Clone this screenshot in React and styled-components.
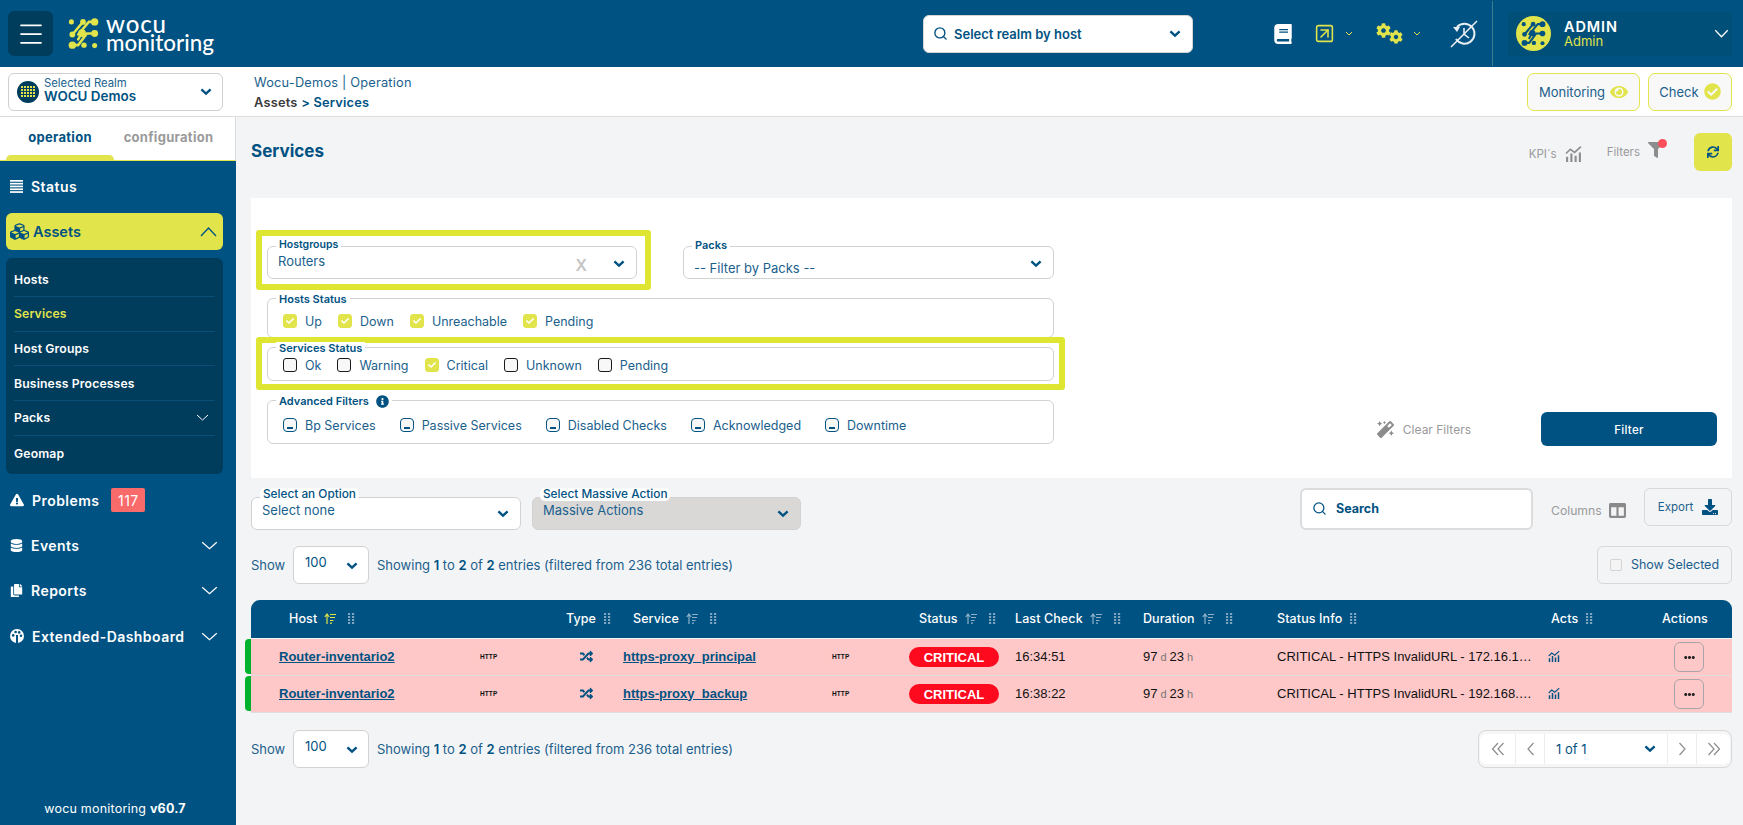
import React from "react";
import styled, { createGlobalStyle } from "styled-components";
import {
  FaBook,
  FaCog,
  FaEye,
  FaCheckCircle,
  FaSync,
  FaDownload,
  FaRandom,
  FaFilter,
  FaMagic,
  FaExclamationTriangle,
  FaDatabase,
  FaCopy,
  FaCubes,
  FaInfoCircle,
  FaColumns,
  FaEllipsisH,
  FaCheck,
} from "react-icons/fa";
import { Menu, Search, SquareArrowUpRight } from "lucide-react";

const NAVY = "#005282";
const DARK = "#003c5c";
const YELLOW = "#e1e44b";
const LIME = "#dfe632";
const TEXT = "#1b5f8d";
const COLS = "305px 57px 286px 106px 128px 134px 274px 109px 82px";

const GlobalStyle = createGlobalStyle`
  html, body { margin: 0; padding: 0; height: 100%; }
  body { background: #f3f4f6; font-family: "Inter", "Noto Sans", sans-serif; color: ${NAVY}; }
  * { box-sizing: border-box; }
`;

const Chevron = ({ w = 14, h = 9, color = NAVY, sw = 2.4 }) => (
  <svg width={w} height={h} viewBox={`0 0 ${w} ${h}`} fill="none">
    <polyline points={`${sw},${sw} ${w / 2},${h - sw} ${w - sw},${sw}`} stroke={color} strokeWidth={sw} />
  </svg>
);

const LogoMark = ({ size = 31, color = YELLOW }) => (
  <svg width={size} height={size} viewBox="0 0 31 32" fill="none" stroke={color} strokeLinecap="round" style={{ flexShrink: 0 }}>
    <g strokeWidth="2.6">
      <path d="M15 4 L5 16" />
      <path d="M27 4 H21 L10 17" />
      <path d="M27 16 H19 L10 28 H4" />
      <path d="M14 15 L10 22" />
    </g>
    <g fill={color} stroke="none">
      <circle cx="3" cy="4" r="2.6" />
      <circle cx="15" cy="4" r="3" />
      <circle cx="27" cy="4" r="3.8" />
      <circle cx="4" cy="17" r="3" />
      <circle cx="14" cy="15.5" r="4" />
      <circle cx="27" cy="16" r="3.6" />
      <circle cx="4" cy="28" r="3.8" />
      <circle cx="16" cy="28" r="2.8" />
      <circle cx="27" cy="28.5" r="2.6" />
    </g>
  </svg>
);

const RealmMark = () => (
  <svg width="22" height="22" viewBox="0 0 22 22">
    <circle cx="11" cy="11" r="11" fill={DARK} />
    {[5, 8, 11, 14, 17].flatMap((x) =>
      [6, 9, 12, 15].map((y) => <rect key={`${x}-${y}`} x={x - 1} y={y - 1} width="2" height="2" fill={YELLOW} />)
    )}
  </svg>
);

const NoHistory = () => (
  <svg width="28" height="28" viewBox="0 0 28 28" fill="none" stroke="#e8eef2" strokeWidth="1.6">
    <path d="M7 7 A10 10 0 1 1 6 19" strokeWidth="2" />
    <path d="M3 7 H10 L7 12 Z" fill="#e8eef2" stroke="none" />
    <path d="M14 8 V14 L19 18" />
    <path d="M27 1 L1 27" />
  </svg>
);

const KpiIcon = ({ color = "#8d8d8d", size = 17 }) => (
  <svg width={size} height={size} viewBox="0 0 16 16" fill="none" stroke={color}>
    <path d="M1 8 L5 4 L9 7 L15 1.5" strokeWidth="1.5" />
    <path d="M2 16 V11 M6 16 V8 M10 16 V10 M14 16 V7" strokeWidth="2" />
  </svg>
);

const SortIcon = ({ color = "#8fb2c9" }) => (
  <svg width="12" height="11" viewBox="0 0 12 11" fill="none" stroke={color} strokeWidth="1.2">
    <path d="M3 11 V1.5 M0.8 4 L3 1 L5.2 4" />
    <path d="M6 1.5 H12 M6 4.5 H11 M6 7.5 H9.5 M6 10.2 H8" />
  </svg>
);

const DragIcon = () => (
  <svg width="7" height="11" viewBox="0 0 7 11" fill="#7fa6c0">
    {[0, 4].flatMap((x) =>
      [0, 3, 6, 9].map((y) => <rect key={`${x}-${y}`} x={x} y={y} width="2.2" height="2" />)
    )}
  </svg>
);

const StatusLinesIcon = () => (
  <svg width="13" height="13" viewBox="0 0 13 13" fill="#fff">
    {[0, 2.8, 5.6, 8.4, 11.2].map((y) => (
      <rect key={y} x="0" y={y} width="13" height="1.7" />
    ))}
  </svg>
);

const DashboardIcon = () => (
  <svg width="14" height="14" viewBox="0 0 14 14">
    <circle cx="7" cy="7" r="7" fill="#fff" />
    <g fill={NAVY}>
      <circle cx="3.2" cy="6.4" r="1.3" />
      <circle cx="5.6" cy="3" r="1.3" />
      <circle cx="9.2" cy="3.4" r="1.3" />
      <circle cx="11" cy="6.8" r="1.3" />
      <rect x="6" y="6" width="2" height="8" />
    </g>
  </svg>
);

const DoubleArrow = ({ flip }) => (
  <svg width="14" height="14" viewBox="0 0 14 14" fill="none" stroke="#8c8c8c" strokeWidth="1.2">
    <g transform={flip ? "rotate(180 7 7)" : undefined}>
      <path d="M7 1 L1.5 7 L7 13 M12.5 1 L7 7 L12.5 13" />
    </g>
  </svg>
);

const SingleArrow = ({ flip }) => (
  <svg width="9" height="14" viewBox="0 0 9 14" fill="none" stroke="#8c8c8c" strokeWidth="1.2">
    <g transform={flip ? "rotate(180 4.5 7)" : undefined}>
      <path d="M7.5 1 L2 7 L7.5 13" />
    </g>
  </svg>
);

const Page = styled.div`
  height: 825px;
  width: 1743px;
  display: flex;
  flex-direction: column;
  overflow: hidden;
`;

const TopBar = styled.header`
  height: 67px;
  background: ${NAVY};
  display: flex;
  align-items: center;
  padding-left: 8px;
  flex-shrink: 0;
`;

const Burger = styled.button`
  width: 45px;
  height: 45px;
  border: 0;
  border-radius: 6px;
  background: ${DARK};
  color: #fff;
  display: flex;
  align-items: center;
  justify-content: center;
  padding: 0;
`;

const Logo = styled.div`
  display: flex;
  align-items: center;
  gap: 7px;
  margin-left: 15px;
  width: 147px;
`;

const LogoText = styled.div`
  color: #fff;
  font-family: "Lato", sans-serif;
  font-weight: 500;
  font-size: 22.4px;
  line-height: 18px;
  white-space: nowrap;
  b { font-weight: 500; letter-spacing: 0.9px; font-size: 24px; }
`;

const RealmSearch = styled.div`
  margin-left: 708px;
  width: 270px;
  height: 38px;
  background: #fff;
  border: 1px solid #d4d4d4;
  border-radius: 6px;
  display: flex;
  align-items: center;
  padding: 0 10px 0 9px;
  gap: 6px;
  font-size: 13px;
  font-weight: 600;
  color: ${NAVY};
  span { flex: 1; }
`;

const TopIcons = styled.div`
  display: flex;
  align-items: center;
  margin-left: 80px;
  width: 219px;
  height: 67px;
`;

const TopIcon = styled.div`
  display: flex;
  align-items: center;
  gap: 10px;
  color: ${(p) => p.$color || "#fff"};
  margin-right: ${(p) => p.$gap || 0}px;
`;

const GearPair = styled.div`
  display: flex;
  align-items: flex-start;
  width: 27px;
  svg:last-child { margin: 7px 0 0 -2px; }
`;

const UserArea = styled.div`
  height: 65px;
  border-left: 1px solid #3f7c8f;
  display: flex;
  align-items: center;
  padding-left: 15px;
`;

const UserCard = styled.div`
  width: 224px;
  height: 44px;
  background: #004f78;
  display: flex;
  align-items: center;
  padding: 0 3px 0 8px;
`;

const Avatar = styled.div`
  width: 35px;
  height: 35px;
  border-radius: 50%;
  background: ${YELLOW};
  display: flex;
  align-items: center;
  justify-content: center;
`;

const UserName = styled.div`
  margin-left: 13px;
  flex: 1;
  line-height: 15px;
  padding-top: 1px;
`;

const UserTitle = styled.div`
  color: #fff;
  font-size: 14.5px;
  font-weight: 600;
  letter-spacing: 0.9px;
`;

const UserRole = styled.div`
  color: ${YELLOW};
  font-size: 13px;
`;

const SubBar = styled.div`
  height: 50px;
  background: #fff;
  border-bottom: 1px solid #dcdcdc;
  display: flex;
  align-items: center;
  padding: 0 11px 0 8px;
  flex-shrink: 0;
`;

const RealmBox = styled.div`
  width: 215px;
  height: 38px;
  border: 1px solid #cfcfcf;
  border-radius: 6px;
  display: flex;
  align-items: center;
  padding: 0 9px 0 8px;
  gap: 5px;
`;

const RealmText = styled.div`
  flex: 1;
  line-height: 12px;
  padding-bottom: 4px;
  small { display: block; font-size: 11.3px; color: ${TEXT}; }
  b { font-size: 13.4px; font-weight: 600; color: ${NAVY}; }
`;

const Crumbs = styled.div`
  margin-left: 31px;
  flex: 1;
  font-size: 12.8px;
  line-height: 19.5px;
  padding-top: 2px;
  color: ${TEXT};
  letter-spacing: 0.2px;
  strong { font-weight: 600; color: ${NAVY}; }
  em { font-style: normal; font-weight: 600; color: #3b3b3b; }
`;

const ModeButton = styled.div`
  height: 38px;
  border: 1px solid ${YELLOW};
  border-radius: 7px;
  background: #f8f8f8;
  display: flex;
  align-items: center;
  justify-content: center;
  gap: 5px;
  width: ${(p) => p.$w}px;
  margin-left: 8px;
  font-size: 13px;
  color: ${TEXT};
  svg { color: ${YELLOW}; }
`;

const Body = styled.div`
  flex: 1;
  display: flex;
  min-height: 0;
`;

const Sidebar = styled.aside`
  width: 236px;
  flex-shrink: 0;
  display: flex;
  flex-direction: column;
  background: ${NAVY};
`;

const Tabs = styled.div`
  height: 44px;
  background: #fff;
  border-bottom: 1px solid ${YELLOW};
  border-right: 1px solid #dcdcdc;
  display: grid;
  grid-template-columns: 108px 1fr;
  padding-left: 6px;
`;

const Tab = styled.div`
  position: relative;
  text-align: center;
  padding: 12px ${(p) => (p.$active ? 0 : 12)}px 0 0;
  font-size: 13px;
  font-weight: 700;
  letter-spacing: 0.3px;
  color: ${(p) => (p.$active ? NAVY : "#9a9a9a")};
  ${(p) =>
    p.$active &&
    `&::after {
      content: "";
      position: absolute;
      left: 0; right: 0; bottom: 0;
      height: 5px;
      background: ${YELLOW};
      border-radius: 6px 6px 0 0;
    }`}
`;

const Nav = styled.nav`
  flex: 1;
  display: flex;
  flex-direction: column;
  padding: 3px 0 0;
`;

const NavItem = styled.div`
  height: 45.4px;
  display: flex;
  align-items: center;
  padding: 0 18px 0 10px;
  color: #fff;
  font-size: 14px;
  font-weight: 600;
  letter-spacing: 0.45px;
  gap: 8px;
  svg:first-child { flex-shrink: 0; }
  > span { flex: ${(p) => (p.$noFlex ? "none" : 1)}; }
`;

const ActiveItem = styled.div`
  height: 37px;
  margin: 4px 13px 0 6px;
  background: ${YELLOW};
  border-radius: 6px;
  display: flex;
  align-items: center;
  padding: 0 6px 0 4px;
  gap: 4px;
  color: ${NAVY};
  font-size: 14.5px;
  font-weight: 600;
  span { flex: 1; }
`;

const SubMenu = styled.div`
  margin: 8px 13px 4px 6px;
  background: ${DARK};
  border-radius: 6px;
  padding: 4px 8px 3px;
`;

const SubItem = styled.div`
  height: 34.7px;
  display: flex;
  align-items: center;
  justify-content: space-between;
  border-bottom: ${(p) => (p.$last ? "0" : "1px solid #0a4f78")};
  font-size: 12.2px;
  font-weight: 600;
  letter-spacing: 0.15px;
  color: ${(p) => (p.$active ? YELLOW : "#fff")};
  padding-right: 6px;
`;

const Badge = styled.span`
  background: #f96a6a;
  color: #fff;
  border-radius: 2px;
  height: 24px;
  width: 34px;
  display: inline-flex;
  align-items: center;
  justify-content: center;
  font-size: 14px;
  font-weight: 400;
  margin-left: 4px;
`;

const Version = styled.div`
  margin-top: auto;
  padding: 0 6px 9px 0;
  text-align: center;
  color: #fff;
  font-size: 12.5px;
  letter-spacing: 0.2px;
  b { font-weight: 700; }
`;

const Main = styled.main`
  flex: 1;
  padding: 0 11px 0 15px;
  min-width: 0;
`;

const TitleRow = styled.div`
  height: 81px;
  display: flex;
  align-items: flex-start;
`;

const Title = styled.h1`
  margin: 24px 0 0;
  flex: 1;
  font-size: 17px;
  font-weight: 700;
  color: ${NAVY};
`;

const GhostTool = styled.div`
  display: flex;
  align-items: center;
  gap: 8px;
  margin: 28px ${(p) => p.$gap}px 0 0;
  font-size: 11.5px;
  color: #9a9a9a;
  position: relative;
`;

const FunnelIcon = styled(FaFilter)`
  margin-top: -4px;
  color: #8d8d8d;
`;

const RedDot = styled.i`
  position: absolute;
  right: -3px;
  top: -6px;
  width: 9px;
  height: 9px;
  border-radius: 50%;
  background: #fb4f5b;
`;

const Refresh = styled.button`
  width: 38px;
  height: 38px;
  margin-top: 16px;
  border: 0;
  border-radius: 6px;
  background: ${YELLOW};
  color: ${NAVY};
  display: flex;
  align-items: center;
  justify-content: center;
`;

const FilterPanel = styled.section`
  height: 280px;
  background: #fff;
  padding: 32px 15px 0 5px;
  display: flex;
  justify-content: space-between;
`;

const FilterColumn = styled.div`
  width: 809px;
`;

const SelectRow = styled.div`
  display: flex;
  align-items: flex-start;
`;

const Highlight = styled.div`
  border: 6px solid ${LIME};
  border-radius: 3px;
  background: #fff;
  width: ${(p) => p.$w}px;
  padding: ${(p) => p.$pad};
  position: relative;
`;

const Field = styled.div`
  position: relative;
  border: 1px solid #d2d2d2;
  border-radius: 6px;
  background: ${(p) => p.$bg || "#fff"};
  height: ${(p) => p.$h}px;
  width: ${(p) => (p.$w ? `${p.$w}px` : "auto")};
  margin: ${(p) => p.$m || 0};
  display: flex;
  align-items: flex-start;
  padding: ${(p) => p.$pad || 0};
  gap: ${(p) => p.$gap || 0}px;
  font-size: 13px;
  color: ${TEXT};
`;

const FieldLabel = styled.label`
  position: absolute;
  left: ${(p) => p.$left ?? 8}px;
  top: ${(p) => p.$top ?? -6}px;
  padding: 0 3px;
  background: #fff;
  font-size: ${(p) => p.$fs ?? 11}px;
  line-height: 13px;
  font-weight: ${(p) => p.$weight ?? 600};
  color: ${NAVY};
  display: flex;
  align-items: center;
  gap: 7px;
  border-radius: ${(p) => (p.$round ? "5px" : 0)};
`;

const SelectValue = styled.div`
  flex: 1;
  white-space: nowrap;
`;

const ClearMark = styled.span`
  color: #c4c4c4;
  font-weight: 600;
  font-size: 16px;
  margin: 5px 25px 0 0;
  line-height: 14px;
`;

const ChevronSlot = styled.div`
  margin-top: ${(p) => p.$top ?? 13}px;
  line-height: 0;
`;

const CheckLabel = styled.div`
  display: flex;
  align-items: center;
  gap: 8px;
  font-size: 12.5px;
  height: 16px;
  color: ${TEXT};
`;

const Box = styled.span`
  width: 14px;
  height: 14px;
  border-radius: ${(p) => (p.$kind === "dash" ? "4px" : "3px")};
  display: inline-flex;
  align-items: center;
  justify-content: center;
  border: 1px solid ${(p) => (p.$kind === "on" ? YELLOW : p.$kind === "dash" ? NAVY : "#1a1a1a")};
  background: ${(p) => (p.$kind === "on" ? YELLOW : "#f8f8f8")};
  color: #fff;
  font-size: 8px;
  position: relative;
  ${(p) =>
    p.$kind === "dash" &&
    `&::after {
      content: "";
      position: absolute;
      left: 3px; right: 3px; bottom: 2px;
      height: 1.6px;
      background: ${NAVY};
    }`}
`;

const FilterActions = styled.div`
  display: flex;
  align-items: center;
  margin-top: 182px;
  height: 34px;
`;

const ClearFilters = styled.div`
  display: flex;
  align-items: center;
  gap: 9px;
  color: #9a9a9a;
  font-size: 12px;
  margin-right: 70px;
  svg { color: #8c8c8c; }
`;

const FilterButton = styled.button`
  width: 176px;
  height: 34px;
  border: 0;
  border-radius: 6px;
  background: ${NAVY};
  color: #fff;
  font: 500 11.5px "Inter", sans-serif;
  letter-spacing: 0.3px;
  padding-top: 2px;
`;

const Toolbar = styled.div`
  display: flex;
  align-items: flex-start;
  padding-top: 10px;
  height: 68px;
`;

const SearchBox = styled.div`
  margin-left: auto;
  width: 233px;
  height: 42px;
  border: 2px solid #dcdcdc;
  border-radius: 6px;
  background: #fff;
  display: flex;
  align-items: center;
  gap: 9px;
  padding: 0 0 1px 10px;
  font-size: 12.5px;
  font-weight: 700;
  color: ${NAVY};
`;

const ColumnsTool = styled.div`
  margin: 14px 0 0 18px;
  display: flex;
  align-items: center;
  gap: 7px;
  width: 93px;
  font-size: 12.2px;
  color: #9a9a9a;
  svg { color: #8a8a8a; }
`;

const OutlineButton = styled.div`
  width: ${(p) => p.$w}px;
  height: 38px;
  border: 1px solid #d8d8d8;
  border-radius: 6px;
  display: flex;
  align-items: center;
  justify-content: center;
  gap: 9px;
  font-size: ${(p) => p.$fs || 11.5}px;
  color: ${TEXT};
  svg { color: ${NAVY}; }
`;

const EntriesRow = styled.div`
  display: flex;
  align-items: center;
  height: 38px;
  font-size: 13px;
  color: ${TEXT};
  padding-bottom: 1px;
  b { font-weight: 600; color: ${NAVY}; }
`;

const ShowLabel = styled.span`
  width: 42px;
  font-size: 13px;
`;

const PageSize = styled.div`
  width: 76px;
  height: 38px;
  border: 1px solid #d2d2d2;
  border-radius: 6px;
  background: #fff;
  display: flex;
  align-items: flex-start;
  justify-content: space-between;
  padding: 7px 9px 0 11px;
  font-size: 13px;
  color: ${NAVY};
  svg { margin-top: 7px; }
`;

const EntriesText = styled.span`
  margin-left: 8px;
  flex: 1;
`;

const SelectedBox = styled.span`
  width: 12px;
  height: 12px;
  border: 1px solid #d4d4d4;
  border-radius: 2px;
  background: #f4f4f4;
`;

const Table = styled.div`
  margin-top: 16px;
  position: relative;
`;

const HeadRow = styled.div`
  height: 38px;
  background: ${NAVY};
  border-radius: 9px 9px 0 0;
  display: grid;
  grid-template-columns: ${COLS};
  align-items: center;
  margin-bottom: 1px;
  padding-bottom: 1px;
`;

const HeadCell = styled.div`
  display: flex;
  align-items: center;
  gap: 7px;
  padding-left: ${(p) => p.$pad}px;
  color: #fff;
  font-size: 12.5px;
  font-weight: 500;
  letter-spacing: 0.1px;
  white-space: nowrap;
  svg { flex-shrink: 0; }
  svg:last-child { margin-left: ${(p) => p.$dragGap}px; }
`;

const Row = styled.div`
  position: relative;
  height: 37px;
  padding-bottom: 2px;
  background: #ffc8c8;
  border-bottom: 1px solid #e3dcdc;
  display: grid;
  grid-template-columns: ${COLS};
  align-items: center;
  font-family: "Liberation Sans", Arial, sans-serif;
  font-size: 13px;
  color: #111;
  &::before {
    content: "";
    position: absolute;
    left: -6px;
    top: 0;
    bottom: 1px;
    width: 6px;
    background: #00b22d;
    border-radius: 4px 0 0 4px;
  }
`;

const Cell = styled.div`
  display: flex;
  align-items: center;
  padding-left: ${(p) => p.$pad}px;
  min-width: 0;
`;

const RowLink = styled.a`
  width: ${(p) => p.$w}px;
  font-weight: 700;
  color: ${NAVY};
  text-decoration: underline;
`;

const HttpTag = styled.span`
  font-size: 6.5px;
  font-weight: 700;
  color: #111;
  letter-spacing: 0.1px;
`;

const CriticalPill = styled.span`
  width: 90px;
  height: 20px;
  margin-top: 2px;
  border-radius: 10px;
  background: #fe0a1f;
  color: #fff;
  font-weight: 700;
  display: flex;
  align-items: center;
  justify-content: center;
`;

const Duration = styled.span`
  small { font-size: 11px; color: #777; margin: 0 3px; }
  small:last-child { margin-right: 0; }
`;

const InfoText = styled.span`
  max-width: 257px;
  overflow: hidden;
  text-overflow: ellipsis;
  white-space: nowrap;
`;

const DotsButton = styled.div`
  width: 30px;
  height: 30px;
  margin-top: 2px;
  border: 1px solid #a9a4a8;
  border-radius: 6px;
  display: flex;
  align-items: center;
  justify-content: center;
  color: #222;
`;

const FooterRow = styled(EntriesRow)`
  margin-top: 17px;
`;

const Pager = styled.div`
  width: 254px;
  height: 38px;
  border: 1px solid #d8d8d8;
  border-radius: 8px;
  background: #f6f6f6;
  display: flex;
  align-items: stretch;
  padding: 3px 1px;
`;

const PagerCell = styled.div`
  width: ${(p) => p.$w}px;
  background: #fff;
  border-left: ${(p) => (p.$sep ? "1px solid #ececec" : "0")};
  display: flex;
  align-items: center;
  justify-content: center;
  border-radius: ${(p) => p.$radius || 0};
`;

const PagerSelect = styled.div`
  flex: 1;
  background: #fff;
  border-left: 1px solid #ececec;
  display: flex;
  align-items: center;
  justify-content: space-between;
  padding: 0 10px 0 11px;
  font-size: 13px;
  color: ${NAVY};
`;

const columns = [
  { label: "Host", pad: 38, sort: YELLOW },
  { label: "Type", pad: 10 },
  { label: "Service", pad: 20, sort: "#8fb2c9" },
  { label: "Status", pad: 20, sort: "#8fb2c9" },
  { label: "Last Check", pad: 10, sort: "#8fb2c9" },
  { label: "Duration", pad: 10, sort: "#8fb2c9" },
  { label: "Status Info", pad: 10 },
  { label: "Acts", pad: 10 },
  { label: "Actions", pad: 12, noDrag: true },
];

const rows = [
  { service: "https-proxy_principal", time: "16:34:51", info: "CRITICAL - HTTPS InvalidURL - 172.16.1.10:443 certificate" },
  { service: "https-proxy_backup", time: "16:38:22", info: "CRITICAL - HTTPS InvalidURL - 192.168.1.10:443 certificate" },
];

const hostStatus = ["Up", "Down", "Unreachable", "Pending"];
const serviceStatus = [
  { label: "Ok" },
  { label: "Warning" },
  { label: "Critical", on: true },
  { label: "Unknown" },
  { label: "Pending" },
];
const advanced = ["Bp Services", "Passive Services", "Disabled Checks", "Acknowledged", "Downtime"];

const Check = ({ kind, children }) => (
  <CheckLabel>
    <Box $kind={kind}>{kind === "on" && <FaCheck />}</Box>
    {children}
  </CheckLabel>
);

const App = () => {
  return (
    <Page>
      <GlobalStyle />
      <TopBar>
        <Burger>
          <Menu size={30} strokeWidth={1.4} />
        </Burger>
        <Logo>
          <LogoMark />
          <LogoText>
            <b>wocu</b>
            <br />
            monitoring
          </LogoText>
        </Logo>
        <RealmSearch>
          <Search size={15} strokeWidth={2.2} />
          <span>Select realm by host</span>
          <Chevron />
        </RealmSearch>
        <TopIcons>
          <TopIcon $gap={21}>
            <FaBook size={20} />
          </TopIcon>
          <TopIcon $gap={23} $color={YELLOW}>
            <SquareArrowUpRight size={21} strokeWidth={1.8} />
            <Chevron w={8} h={5} color={YELLOW} sw={1} />
          </TopIcon>
          <TopIcon $gap={29} $color={YELLOW}>
            <GearPair>
              <FaCog size={15} />
              <FaCog size={14} />
            </GearPair>
            <Chevron w={8} h={5} color={YELLOW} sw={1} />
          </TopIcon>
          <TopIcon>
            <NoHistory />
          </TopIcon>
        </TopIcons>
        <UserArea>
          <UserCard>
            <Avatar>
              <LogoMark size={25} color={NAVY} />
            </Avatar>
            <UserName>
              <UserTitle>ADMIN</UserTitle>
              <UserRole>Admin</UserRole>
            </UserName>
            <Chevron w={15} h={9} color="#fff" sw={1.3} />
          </UserCard>
        </UserArea>
      </TopBar>

      <SubBar>
        <RealmBox>
          <RealmMark />
          <RealmText>
            <small>Selected Realm</small>
            <b>WOCU Demos</b>
          </RealmText>
          <Chevron />
        </RealmBox>
        <Crumbs>
          Wocu-Demos | Operation
          <br />
          <em>Assets</em> <strong>&gt; Services</strong>
        </Crumbs>
        <ModeButton $w={113}>
          Monitoring <FaEye size={18} />
        </ModeButton>
        <ModeButton $w={84}>
          Check <FaCheckCircle size={17} />
        </ModeButton>
      </SubBar>

      <Body>
        <Sidebar>
          <Tabs>
            <Tab $active>operation</Tab>
            <Tab>configuration</Tab>
          </Tabs>
          <Nav>
            <NavItem>
              <StatusLinesIcon />
              <span>Status</span>
            </NavItem>
            <ActiveItem>
              <FaCubes size={19} />
              <span>Assets</span>
              <svg width="17" height="10" viewBox="0 0 17 10" fill="none" stroke={NAVY} strokeWidth="1.3">
                <polyline points="1,9 8.5,1 16,9" />
              </svg>
            </ActiveItem>
            <SubMenu>
              <SubItem>Hosts</SubItem>
              <SubItem $active>Services</SubItem>
              <SubItem>Host Groups</SubItem>
              <SubItem>Business Processes</SubItem>
              <SubItem>
                Packs
                <Chevron w={13} h={7} color="#fff" sw={1} />
              </SubItem>
              <SubItem $last>Geomap</SubItem>
            </SubMenu>
            <NavItem $noFlex>
              <FaExclamationTriangle size={14} />
              <span>Problems</span>
              <Badge>117</Badge>
            </NavItem>
            <NavItem>
              <FaDatabase size={13} />
              <span>Events</span>
              <Chevron w={17} h={9} color="#fff" sw={1.2} />
            </NavItem>
            <NavItem>
              <FaCopy size={13} />
              <span>Reports</span>
              <Chevron w={17} h={9} color="#fff" sw={1.2} />
            </NavItem>
            <NavItem>
              <DashboardIcon />
              <span>Extended-Dashboard</span>
              <Chevron w={17} h={9} color="#fff" sw={1.2} />
            </NavItem>
            <Version>
              wocu monitoring <b>v60.7</b>
            </Version>
          </Nav>
        </Sidebar>

        <Main>
          <TitleRow>
            <Title>Services</Title>
            <GhostTool $gap={25}>
              KPI´s <KpiIcon />
            </GhostTool>
            <GhostTool $gap={30}>
              Filters
              <FunnelIcon size={16} />
              <RedDot />
            </GhostTool>
            <Refresh>
              <FaSync size={12} />
            </Refresh>
          </TitleRow>

          <FilterPanel>
            <FilterColumn>
              <SelectRow>
                <Highlight $w={395} $pad="10px 8px 5px 5px">
                  <Field $h={33} $pad="6px 10px 0 10px">
                    <FieldLabel $top={-9} $fs={10.5}>Hostgroups</FieldLabel>
                    <SelectValue>Routers</SelectValue>
                    <ClearMark>X</ClearMark>
                    <ChevronSlot $top={6}>
                      <Chevron />
                    </ChevronSlot>
                  </Field>
                </Highlight>
                <Field $h={33} $w={371} $m="16px 0 0 32px" $pad="13px 10px 0 10px">
                  <FieldLabel $top={-8}>Packs</FieldLabel>
                  <SelectValue>-- Filter by Packs --</SelectValue>
                  <ChevronSlot $top={-1}>
                    <Chevron />
                  </ChevronSlot>
                </Field>
              </SelectRow>

              <Field $h={40} $m="8px 11px -1px 11px" $pad="14px 0 0 15px" $gap={16}>
                <FieldLabel>Hosts Status</FieldLabel>
                {hostStatus.map((label) => (
                  <Check key={label} kind="on">
                    {label}
                  </Check>
                ))}
              </Field>

              <Highlight $w={809} $pad="4px 5px 3px 5px">
                <Field $h={34} $pad="9px 0 0 15px" $gap={16}>
                  <FieldLabel>Services Status</FieldLabel>
                  {serviceStatus.map((s) => (
                    <Check key={s.label} kind={s.on ? "on" : "off"}>
                      {s.label}
                    </Check>
                  ))}
                </Field>
              </Highlight>

              <Field $h={44} $m="10px 11px 0 11px" $pad="16px 0 0 15px" $gap={24}>
                <FieldLabel>
                  Advanced Filters
                  <FaInfoCircle size={13} color={NAVY} />
                </FieldLabel>
                {advanced.map((label) => (
                  <Check key={label} kind="dash">
                    {label}
                  </Check>
                ))}
              </Field>
            </FilterColumn>

            <FilterActions>
              <ClearFilters>
                <FaMagic size={17} />
                Clear Filters
              </ClearFilters>
              <FilterButton>Filter</FilterButton>
            </FilterActions>
          </FilterPanel>

          <Toolbar>
            <Field $h={33} $w={270} $m="9px 0 0 0" $pad="4px 10px 0 10px">
              <FieldLabel $left={8} $top={-10} $fs={11.8} $weight={500} $round>Select an Option</FieldLabel>
              <SelectValue>Select none</SelectValue>
              <ChevronSlot $top={7}>
                <Chevron />
              </ChevronSlot>
            </Field>
            <Field $h={33} $w={269} $bg="#d9d8d6" $m="9px 0 0 11px" $pad="4px 10px 0 10px">
              <FieldLabel $left={7} $top={-10} $fs={11.8} $weight={500} $round>Select Massive Action</FieldLabel>
              <SelectValue>Massive Actions</SelectValue>
              <ChevronSlot $top={7}>
                <Chevron />
              </ChevronSlot>
            </Field>
            <SearchBox>
              <Search size={15} strokeWidth={2} />
              Search
            </SearchBox>
            <ColumnsTool>
              Columns
              <FaColumns size={17} />
            </ColumnsTool>
            <OutlineButton $w={88}>
              Export <FaDownload size={16} />
            </OutlineButton>
          </Toolbar>

          <EntriesRow>
            <ShowLabel>Show</ShowLabel>
            <PageSize>
              100
              <Chevron />
            </PageSize>
            <EntriesText>
              Showing <b>1</b> to <b>2</b> of <b>2</b> entries (filtered from 236 total entries)
            </EntriesText>
            <OutlineButton $w={135} $fs={12.5}>
              <SelectedBox />
              Show Selected
            </OutlineButton>
          </EntriesRow>

          <Table>
            <HeadRow>
              {columns.map((c) => (
                <HeadCell key={c.label} $pad={c.pad} $dragGap={c.sort ? 5 : 1}>
                  {c.label}
                  {c.sort && <SortIcon color={c.sort} />}
                  {!c.noDrag && <DragIcon />}
                </HeadCell>
              ))}
            </HeadRow>
            {rows.map((r) => (
              <Row key={r.service}>
                <Cell $pad={28}>
                  <RowLink $w={201}>Router-inventario2</RowLink>
                  <HttpTag>HTTP</HttpTag>
                </Cell>
                <Cell $pad={24}>
                  <FaRandom size={13} color={NAVY} />
                </Cell>
                <Cell $pad={10}>
                  <RowLink $w={209}>{r.service}</RowLink>
                  <HttpTag>HTTP</HttpTag>
                </Cell>
                <Cell $pad={10}>
                  <CriticalPill>CRITICAL</CriticalPill>
                </Cell>
                <Cell $pad={10}>{r.time}</Cell>
                <Cell $pad={10}>
                  <Duration>
                    97<small>d</small>23<small>h</small>
                  </Duration>
                </Cell>
                <Cell $pad={10}>
                  <InfoText>{r.info}</InfoText>
                </Cell>
                <Cell $pad={7}>
                  <KpiIcon color={NAVY} size={12} />
                </Cell>
                <Cell $pad={24}>
                  <DotsButton>
                    <FaEllipsisH size={11} />
                  </DotsButton>
                </Cell>
              </Row>
            ))}
          </Table>

          <FooterRow>
            <ShowLabel>Show</ShowLabel>
            <PageSize>
              100
              <Chevron />
            </PageSize>
            <EntriesText>
              Showing <b>1</b> to <b>2</b> of <b>2</b> entries (filtered from 236 total entries)
            </EntriesText>
            <Pager>
              <PagerCell $w={35} $radius="6px 0 0 6px">
                <DoubleArrow />
              </PagerCell>
              <PagerCell $w={29} $sep>
                <SingleArrow />
              </PagerCell>
              <PagerSelect>
                1 of 1
                <Chevron />
              </PagerSelect>
              <PagerCell $w={29} $sep>
                <SingleArrow flip />
              </PagerCell>
              <PagerCell $w={34} $sep $radius="0 6px 6px 0">
                <DoubleArrow flip />
              </PagerCell>
            </Pager>
          </FooterRow>
        </Main>
      </Body>
    </Page>
  );
};

export default App;
